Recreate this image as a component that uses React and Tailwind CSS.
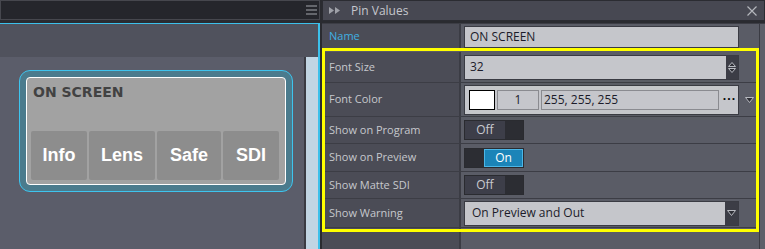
import React from "react";

const labelFont = "font-['Open_Sans','Liberation_Sans',sans-serif]";

const Toggle = ({ on }) => {
  if (on) {
    return (
      <div className="flex h-[20px] w-[60px] border border-[#2a2b30] bg-[#2c2d33]">
        <div className="w-[19px]" />
        <div className="flex flex-1 items-center justify-center border border-[#4cb6e6] bg-[#1b84b8] text-[12px] text-white">
          On
        </div>
      </div>
    );
  }
  return (
    <div className="flex h-[20px] w-[60px] border border-[#2a2b30] bg-[#2c2d33]">
      <div className="flex w-[40px] items-center justify-center bg-[#3d3e49] text-[12px] text-[#c9cacf]">
        Off
      </div>
      <div className="flex-1" />
    </div>
  );
};

const Row = ({ label, h, cyan, children }) => (
  <div className={`flex border-b border-[#3c3d45] ${h}`}>
    <div
      className={`flex w-[139px] items-center border-r-2 border-[#3b3c44] bg-[#4b4c56] pl-[7px] text-[11px] ${
        cyan ? "text-[#3fb0e2]" : "text-[#c6c8cd]"
      }`}
    >
      {label}
    </div>
    <div className="flex flex-1 items-center bg-[#5a5c66] pl-[3px]">{children}</div>
  </div>
);

const Arrow = () => (
  <svg width="9" height="6" viewBox="0 0 9 6">
    <path d="M0.5 0.5 H8.5 L4.5 5.5 Z" fill="#2e2f36" stroke="#b8bac0" strokeWidth="1" />
  </svg>
);

export default function App() {
  return (
    <div className={`flex h-[249px] w-[765px] overflow-hidden bg-[#2a2b30] ${labelFont}`}>
      {/* left: canvas */}
      <div className="flex w-[320px] flex-col">
        <div className="flex h-[20px] items-center justify-end border border-[#46474e] bg-[#25262c] pr-[2px]">
          <svg width="11" height="10" viewBox="0 0 11 10">
            <path d="M0 1 H11 M0 5 H11 M0 9 H11" stroke="#a4a5ab" strokeWidth="1.2" />
          </svg>
        </div>
        <div className="h-[3px]" />
        <div className="flex flex-1 flex-col border-t border-r-2 border-[#3cc0ea]">
          <div className="h-[33px] bg-[#50525d]" />
          <div className="flex flex-1">
            <div className="flex-1 bg-[#5b5d6a] pl-[19px] pt-[13px]">
              <div className="h-[122px] w-[274px] rounded-[11px] border border-[#3ec4ee] bg-[#4b7b8d] p-[6px]">
                <div className="flex h-full flex-col rounded-[4px] border border-white bg-[#a2a2a2] pb-[4px] pl-[4px] pr-[5px] pt-[4px]">
                  <div className="pl-[2px] font-['DejaVu_Sans',sans-serif] text-[14px] font-bold text-[#424242]">
                    ON SCREEN
                  </div>
                  <div className="mt-auto flex h-[49px] gap-[2px] font-['Liberation_Sans',sans-serif] text-[18px] font-bold text-white">
                    <div className="flex w-[56px] items-center justify-center rounded-[2px] bg-[#8d8d8d]">Info</div>
                    <div className="flex w-[66px] items-center justify-center rounded-[2px] bg-[#8d8d8d]">Lens</div>
                    <div className="flex w-[64px] items-center justify-center rounded-[2px] bg-[#8d8d8d]">Safe</div>
                    <div className="flex w-[56px] items-center justify-center rounded-[2px] bg-[#8d8d8d]">SDI</div>
                  </div>
                </div>
              </div>
            </div>
            <div className="w-[14px] border-l-2 border-[#3a3b43] bg-[#c1d5e3]" />
          </div>
        </div>
      </div>

      <div className="w-[2px]" />

      {/* right: pin values */}
      <div className="flex flex-1 flex-col">
        <div className="flex h-[21px] items-center border border-[#2b2c32] bg-[#474852] px-[6px]">
          <svg width="13" height="7" viewBox="0 0 13 7">
            <path d="M0 0 L5 3.5 L0 7 Z M6 0 L11 3.5 L6 7 Z" fill="#9fa1a8" />
          </svg>
          <span className="ml-[9px] text-[12px] text-[#c5c7cd]">Pin Values</span>
          <svg className="ml-auto mr-[1px]" width="10" height="10" viewBox="0 0 10 10">
            <path d="M0.5 0.5 L9.5 9.5 M9.5 0.5 L0.5 9.5" stroke="#b4b6bc" strokeWidth="1.2" />
          </svg>
        </div>
        <div className="h-[2px]" />
        <div className="relative flex flex-1 border-t border-[#3c3d45]">
          <div className="flex flex-1 flex-col bg-[#5a5c66]">
            <Row label="Name" h="h-[26px]" cyan>
              <div className="flex h-[22px] w-[275px] items-center border border-[#3a3b43] bg-[#c5c6cb] pl-[5px] text-[12px] text-[#1c1c2a]">
                ON SCREEN
              </div>
            </Row>
            <Row label="Font Size" h="h-[33px] pt-[2px]">
              <div className="flex h-[25px] w-[275px] border border-[#3a3b43] bg-[#c5c6cb]">
                <div className="flex flex-1 items-center pl-[5px] text-[12px] text-[#1c1c2a]">32</div>
                <div className="flex w-[12px] flex-col items-center justify-center gap-[1px] bg-[#3c3d46]">
                  <svg width="8" height="5" viewBox="0 0 8 5">
                    <path d="M0.5 4.5 H7.5 L4 0.5 Z" fill="#2e2f36" stroke="#b8bac0" />
                  </svg>
                  <svg width="8" height="5" viewBox="0 0 8 5">
                    <path d="M0.5 0.5 H7.5 L4 4.5 Z" fill="#2e2f36" stroke="#b8bac0" />
                  </svg>
                </div>
              </div>
            </Row>
            <Row label="Font Color" h="h-[34px]">
              <div className="flex h-[30px] w-[275px] items-center gap-[2px] border border-[#3a3b43] bg-[#c5c6cb] pl-[4px] text-[12px] text-[#1c1c2a]">
                <div className="h-[20px] w-[26px] border border-black bg-white" />
                <div className="flex h-[20px] w-[42px] items-center justify-center border border-[#8a8b90]">1</div>
                <div className="flex h-[20px] w-[178px] items-center border border-[#8a8b90] pl-[2px]">255, 255, 255</div>
                <div className="flex flex-1 items-center justify-center pb-[2px] font-bold tracking-[1px] text-black">···</div>
              </div>
              <div className="ml-[6px]">
                <Arrow />
              </div>
            </Row>
            <Row label="Show on Program" h="h-[27px]">
              <Toggle />
            </Row>
            <Row label="Show on Preview" h="h-[28px]">
              <Toggle on />
            </Row>
            <Row label="Show Matte SDI" h="h-[27px]">
              <Toggle />
            </Row>
            <Row label="Show Warning" h="h-[29px]">
              <div className="flex h-[25px] w-[275px] border border-[#3a3b43] bg-[#c5c6cb]">
                <div className="flex flex-1 items-center pl-[7px] text-[12px] text-[#1c1c2a]">On Preview and Out</div>
                <div className="flex w-[13px] items-center justify-center bg-[#3c3d46]">
                  <Arrow />
                </div>
              </div>
            </Row>
            <div className="flex flex-1">
              <div className="w-[139px] border-r-2 border-[#3b3c44] bg-[#4b4c56]" />
              <div className="flex-1" />
            </div>
          </div>
          <div className="w-[6px] border-l border-[#3a3b43] bg-[#5d5f69]" />
          {/* highlight annotation */}
          <div className="pointer-events-none absolute left-0 top-[24px] h-[184px] w-[437px] border-[3px] border-[#ffff00]" />
        </div>
      </div>
    </div>
  );
}
